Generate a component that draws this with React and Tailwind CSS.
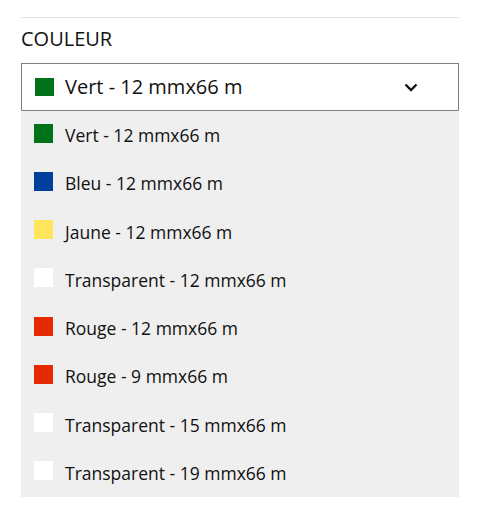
import React from "react";

const options = [
  { label: "Vert - 12 mmx66 m", color: "bg-[#00731a]" },
  { label: "Bleu - 12 mmx66 m", color: "bg-[#00409c]" },
  { label: "Jaune - 12 mmx66 m", color: "bg-[#ffe55c]" },
  { label: "Transparent - 12 mmx66 m", color: "bg-white" },
  { label: "Rouge - 12 mmx66 m", color: "bg-[#e62a00]" },
  { label: "Rouge - 9 mmx66 m", color: "bg-[#e62a00]" },
  { label: "Transparent - 15 mmx66 m", color: "bg-white" },
  { label: "Transparent - 19 mmx66 m", color: "bg-white" },
];

const App = () => {
  return (
    <div className="w-[483px] h-[528px] bg-white pt-[17px] font-['Open_Sans',sans-serif] text-[#111]">
      <div className="ml-[21px] w-[438px]">
        <div className="border-t border-[#e2e2e2]" />
        <p className="mt-[8px] text-[20px] leading-[26px]">COULEUR</p>
        <div className="mt-[11px] flex items-center h-[48px] border border-[#808080] pl-[13px] pr-[40px]">
          <span className="w-[19px] h-[18px] bg-[#00731a] flex-shrink-0" />
          <span className="ml-[11px] text-[20px] flex-grow">Vert - 12 mmx66 m</span>
          <svg width="14" height="9" viewBox="0 0 14 9" className="flex-shrink-0">
            <path d="M1.5 1.5 L7 7 L12.5 1.5" fill="none" stroke="#111" strokeWidth="2.4" />
          </svg>
        </div>
        <ul className="bg-[#efefef]">
          {options.map((o) => (
            <li key={o.label} className="flex items-center h-[48.25px] pl-[13px]">
              <span className={`w-[19px] h-[19px] flex-shrink-0 -mt-[4px] ${o.color}`} />
              <span className="ml-[12px] text-[17.5px]">{o.label}</span>
            </li>
          ))}
        </ul>
      </div>
    </div>
  );
};

export default App;
